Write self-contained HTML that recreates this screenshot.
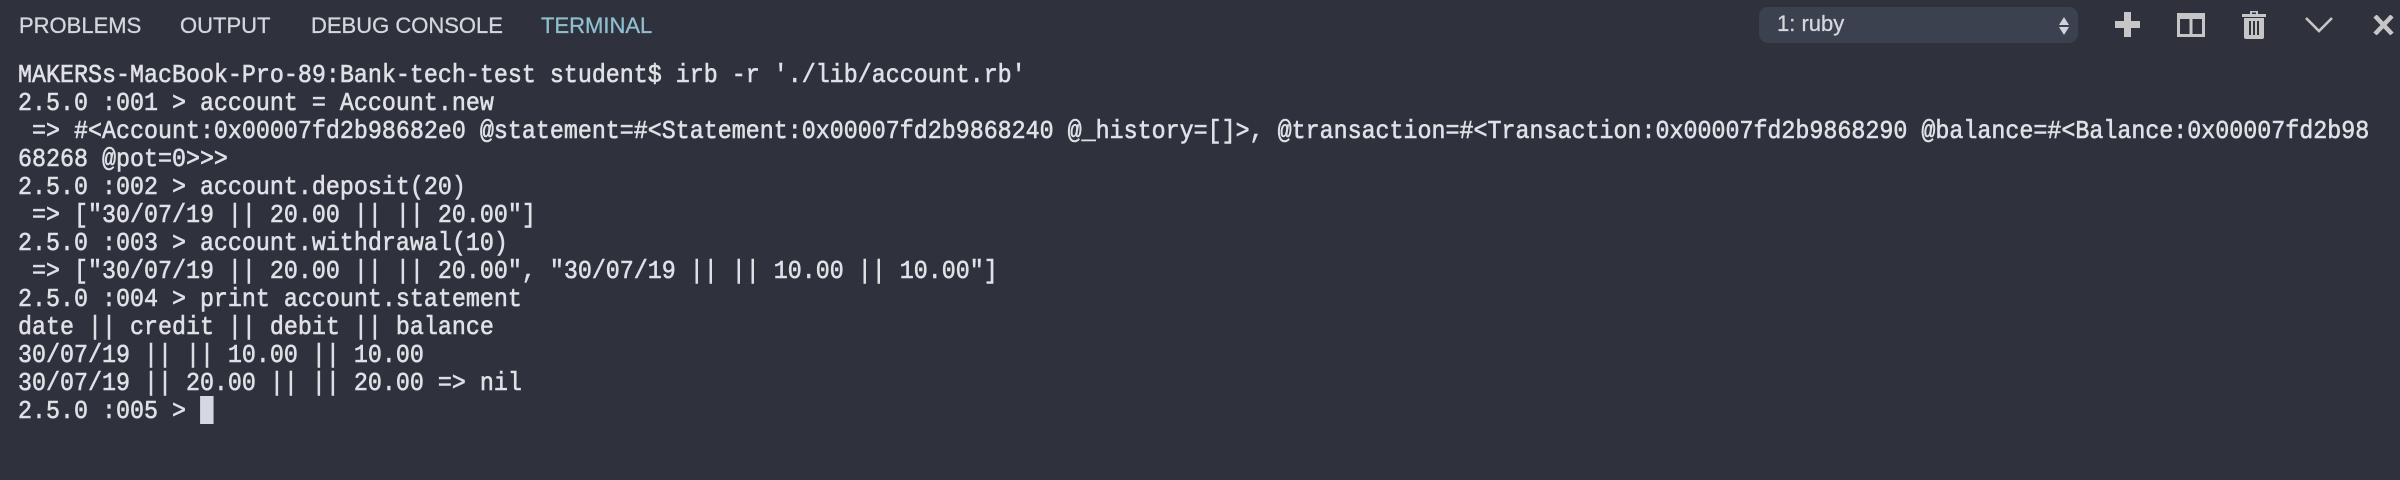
<!DOCTYPE html>
<html><head><meta charset="utf-8"><style>
html,body{margin:0;padding:0;}
body{width:2400px;height:480px;background:#2f323c;position:relative;overflow:hidden;}
.tab{position:absolute;top:15px;font-family:"Liberation Sans",sans-serif;font-size:22px;line-height:22px;color:#d4d6dc;white-space:nowrap;-webkit-text-stroke:0.3px #d4d6dc;}
pre{position:absolute;left:18px;top:61px;margin:0;font-family:"Liberation Mono",monospace;font-size:26px;line-height:28px;color:#dfe1e6;transform:scaleX(0.897);transform-origin:0 0;white-space:pre;-webkit-text-stroke:0.6px #dfe1e6;}
.cur{display:inline-block;width:15px;height:28px;background:#d3d8e3;vertical-align:top;margin-top:-1px;}
.dd{position:absolute;left:1759px;top:7px;width:319px;height:36px;background:#3c4150;border-radius:9px;}
.dd span{position:absolute;left:18px;top:6px;font-family:"Liberation Sans",sans-serif;font-size:22px;line-height:22px;color:#d6d8de;-webkit-text-stroke:0.3px #d6d8de;}
.ic{position:absolute;}
</style></head><body>
<div class="tab" style="left:19px">PROBLEMS</div>
<div class="tab" style="left:180px">OUTPUT</div>
<div class="tab" style="left:311px">DEBUG CONSOLE</div>
<div class="tab" style="left:541px;color:#8fbfcf;-webkit-text-stroke:0.3px #8fbfcf">TERMINAL</div>

<div class="dd"><span>1: ruby</span>
<svg style="position:absolute;left:300px;top:10px" width="10" height="18" viewBox="0 0 10 18"><path d="M5 0 L10 8 L0 8Z M0 10 L10 10 L5 18Z" fill="#cfd2da"/></svg>
</div>

<svg class="ic" style="left:2115px;top:12px" width="25" height="25" viewBox="0 0 25 25"><path d="M9 0h7v9h9v7h-9v9h-7v-9h-9v-7h9z" fill="#c6c6c6"/></svg>
<svg class="ic" style="left:2177px;top:13px" width="28" height="24" viewBox="0 0 28 24"><path d="M0 0h28v24h-28z M3 6v15h9.5v-15z M15.5 6v15h9.5v-15z" fill="#c6c6c6" fill-rule="evenodd"/></svg>
<svg class="ic" style="left:2242px;top:11px" width="24" height="28" viewBox="0 0 24 28"><path d="M8 0h8v3h8v3h-24v-3h8z M10 1.5v1.5h4v-1.5z" fill="#c6c6c6" fill-rule="evenodd"/><path d="M2 7h20v19a2 2 0 0 1-2 2h-16a2 2 0 0 1-2-2z" fill="#c6c6c6"/><path d="M7 10h2v14h-2z M11 10h2v14h-2z M15 10h2v14h-2z" fill="#2f323c"/></svg>
<svg class="ic" style="left:2305px;top:17px" width="28" height="16" viewBox="0 0 28 16"><path d="M1 1 L14 14 L27 1" stroke="#c6c6c6" stroke-width="2.6" fill="none"/></svg>
<svg class="ic" style="left:2373px;top:15px" width="21" height="20" viewBox="0 0 21 20"><path d="M2 1 L19 19 M19 1 L2 19" stroke="#c6c6c6" stroke-width="4.5" fill="none"/></svg>

<pre>MAKERSs-MacBook-Pro-89:Bank-tech-test student$ irb -r './lib/account.rb'
2.5.0 :001 &gt; account = Account.new
 =&gt; #&lt;Account:0x00007fd2b98682e0 @statement=#&lt;Statement:0x00007fd2b9868240 @_history=[]&gt;, @transaction=#&lt;Transaction:0x00007fd2b9868290 @balance=#&lt;Balance:0x00007fd2b98
68268 @pot=0&gt;&gt;&gt;
2.5.0 :002 &gt; account.deposit(20)
 =&gt; ["30/07/19 || 20.00 || || 20.00"]
2.5.0 :003 &gt; account.withdrawal(10)
 =&gt; ["30/07/19 || 20.00 || || 20.00", "30/07/19 || || 10.00 || 10.00"]
2.5.0 :004 &gt; print account.statement
date || credit || debit || balance
30/07/19 || || 10.00 || 10.00
30/07/19 || 20.00 || || 20.00 =&gt; nil
2.5.0 :005 &gt; <span class="cur"></span></pre>
</body></html>
